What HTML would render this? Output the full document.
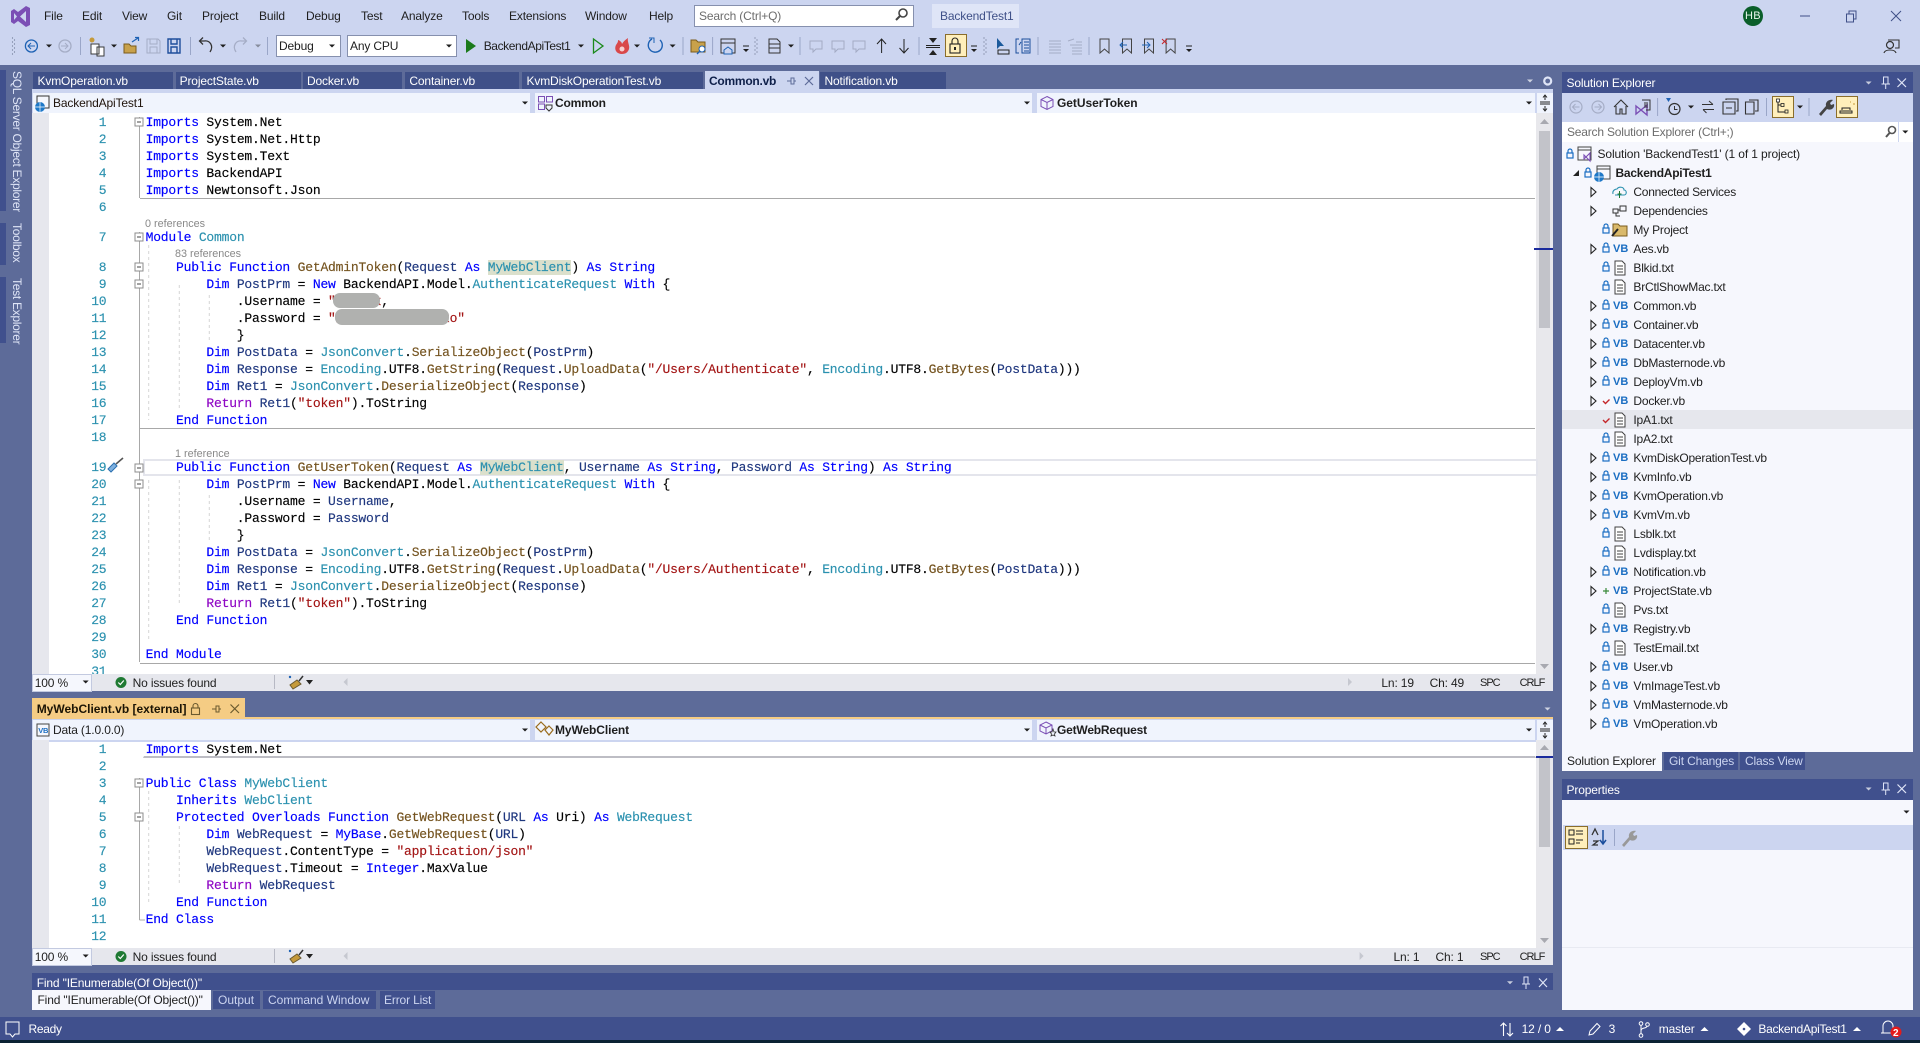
<!DOCTYPE html>
<html lang="en"><head><meta charset="utf-8"><title>BackendTest1 - Visual Studio</title>
<style>
html,body{margin:0;padding:0;width:1920px;height:1043px;overflow:hidden;background:#5D6B99}
body{position:relative;font:12px/16px "Liberation Sans",sans-serif;color:#1e1e1e;letter-spacing:-.15px}
.a{position:absolute;white-space:pre}
.b{position:absolute}
.w{color:#fff}.p{color:#dfe5f7}
.c{position:absolute;left:145.6px;height:17px;margin-top:1px;font:13px/17px "Liberation Mono",monospace;letter-spacing:-.2px;white-space:pre;color:#000;-webkit-text-stroke:.15px}
.n{position:absolute;left:60px;width:46.4px;margin-top:1px;text-align:right;font:13px/17px "Liberation Mono",monospace;letter-spacing:-.2px;color:#2B91AF;-webkit-text-stroke:.15px}
.k{color:#0000FF}.t{color:#2B91AF}.f{color:#74531F}.v{color:#1F377F}.s{color:#A31515}.q{color:#8F08C4}
.h{background:#DBE0CC}
.r{position:absolute;margin-top:1px;color:#888;font-size:10.8px;line-height:14px;letter-spacing:0}
.vb{position:absolute;left:1613px;color:#1b6ec2;font-weight:bold;font-size:11px;line-height:14px;letter-spacing:0}
.x{position:absolute;left:1633.4px;line-height:16px;white-space:pre;letter-spacing:-.2px}
.bd{font-weight:bold}
.u{font-size:11px;letter-spacing:-1px}
.sd{letter-spacing:-.28px}
</style></head><body>
<!-- chrome -->
<div class="b" style="left:0;top:0;width:1920px;height:65px;background:#CCD5F0"></div>
<div class="b" style="left:0;top:1017px;width:1920px;height:23px;background:#40508D"></div>
<div class="b" style="left:0;top:1040px;width:1920px;height:3px;background:#0B2233"></div>
<!-- side tabs -->
<div class="b" style="left:0;top:70px;width:6px;height:141px;background:#40508D"></div>
<div class="b" style="left:0;top:223px;width:6px;height:42px;background:#40508D"></div>
<div class="b" style="left:0;top:277px;width:6px;height:66px;background:#40508D"></div>
<div class="a p sd" style="left:9px;top:71px;writing-mode:vertical-rl">SQL Server Object Explorer</div>
<div class="a p sd" style="left:9px;top:223px;writing-mode:vertical-rl">Toolbox</div>
<div class="a p sd" style="left:9px;top:278px;writing-mode:vertical-rl">Test Explorer</div>
<!-- menu -->
<div class="a" style="left:44px;top:8px">File</div><div class="a" style="left:82px;top:8px">Edit</div><div class="a" style="left:122px;top:8px">View</div><div class="a" style="left:167px;top:8px">Git</div><div class="a" style="left:202px;top:8px">Project</div><div class="a" style="left:259px;top:8px">Build</div><div class="a" style="left:306px;top:8px">Debug</div><div class="a" style="left:361px;top:8px">Test</div><div class="a" style="left:401px;top:8px">Analyze</div><div class="a" style="left:462px;top:8px">Tools</div><div class="a" style="left:509px;top:8px">Extensions</div><div class="a" style="left:585px;top:8px">Window</div><div class="a" style="left:649px;top:8px">Help</div>
<div class="b" style="left:694px;top:5px;width:218px;height:20px;background:#fff;border:1px solid #8690AE"></div>
<div class="a" style="left:699px;top:8px;color:#6d6d6d">Search (Ctrl+Q)</div>
<div class="b" style="left:932px;top:4px;width:87px;height:24px;background:#DFE5F7"></div>
<div class="a" style="left:940px;top:8px;color:#3F5088">BackendTest1</div>
<div class="b" style="left:1742.6px;top:6px;width:20px;height:20px;border-radius:50%;background:#0A5E2A"></div>
<div class="a" style="left:1745px;top:8px;color:#e8f5ec;font-size:11px;letter-spacing:.3px">HB</div>
<!-- toolbar combos -->
<div class="b" style="left:275.5px;top:35px;width:63px;height:20px;background:#fff;border:1px solid #8690AE"></div>
<div class="a" style="left:279px;top:38px">Debug</div>
<div class="b" style="left:346.5px;top:35px;width:108px;height:20px;background:#fff;border:1px solid #8690AE"></div>
<div class="a" style="left:350px;top:38px">Any CPU</div>
<div class="a" style="left:483.7px;top:38px;letter-spacing:-.4px">BackendApiTest1</div>
<div class="b" style="left:945px;top:34px;width:20px;height:21px;background:#FFEFBB;border:1px solid #8A6D2B"></div>
<!-- doc tabs -->
<div class="b" style="left:33px;top:72px;width:140px;height:17px;background:#3F5088"></div>
<div class="b" style="left:176px;top:72px;width:125px;height:17px;background:#3F5088"></div>
<div class="b" style="left:303px;top:72px;width:99px;height:17px;background:#3F5088"></div>
<div class="b" style="left:405px;top:72px;width:114px;height:17px;background:#3F5088"></div>
<div class="b" style="left:522px;top:72px;width:181px;height:17px;background:#3F5088"></div>
<div class="b" style="left:705px;top:71px;width:114px;height:19px;background:#CCD5F0"></div>
<div class="b" style="left:820px;top:72px;width:126px;height:17px;background:#3F5088"></div>
<div class="a w" style="left:37.5px;top:73px">KvmOperation.vb</div><div class="a w" style="left:179.6px;top:73px">ProjectState.vb</div><div class="a w" style="left:307px;top:73px">Docker.vb</div><div class="a w" style="left:409.4px;top:73px">Container.vb</div><div class="a w" style="left:526.5px;top:73px">KvmDiskOperationTest.vb</div>
<div class="a bd" style="left:709px;top:73px;color:#0E1F49;letter-spacing:-.25px">Common.vb</div>
<div class="a w" style="left:824.5px;top:73px">Notification.vb</div>
<!-- editor 1 -->
<div class="b" style="left:32px;top:89px;width:1521px;height:24px;background:#CCD5F0"></div>
<div class="b" style="left:33px;top:92.5px;width:497px;height:20px;background:#F0F4FD"></div>
<div class="b" style="left:535px;top:92.5px;width:497px;height:20px;background:#F0F4FD"></div>
<div class="b" style="left:1037px;top:92.5px;width:498px;height:20px;background:#F0F4FD"></div>
<div class="b" style="left:1537px;top:92.5px;width:16px;height:20px;background:#F0F4FD"></div>
<div class="a" style="left:53px;top:95px;color:#20140c">BackendApiTest1</div>
<div class="a bd" style="left:555px;top:95px;letter-spacing:-.2px">Common</div>
<div class="a bd" style="left:1057px;top:95px;letter-spacing:-.05px">GetUserToken</div>
<div class="b" style="left:32px;top:113px;width:17px;height:561px;background:#E6E7ED"></div>
<div class="b" style="left:49px;top:113px;width:1487px;height:561px;background:#fff;overflow:hidden"></div>
<div class="b" style="left:1536px;top:113px;width:17px;height:561px;background:#E8E8EC"></div>
<div class="b" style="left:1539px;top:131px;width:11px;height:197px;background:#C2C3C9"></div>
<div class="b" style="left:1534px;top:248px;width:19px;height:2px;background:#1a2a9c"></div>
<div class="b" style="left:139.5px;top:198px;width:1395px;height:1px;background:#A8A8A8"></div>
<div class="b" style="left:139.5px;top:428px;width:1395px;height:1px;background:#A8A8A8"></div>
<div class="b" style="left:139.5px;top:662.5px;width:1395px;height:1px;background:#A8A8A8"></div>
<div class="b" style="left:143px;top:459px;width:1391px;height:13px;border:2px solid #E4E5EC"></div>
<div class="b" style="left:332.6px;top:293px;width:47.4px;height:15px;background:#B0B1AF;border-radius:7px;z-index:2"></div>
<div class="b" style="left:334.7px;top:309px;width:114.3px;height:16px;background:#B0B1AF;border-radius:7px;z-index:2"></div>

<div class="n" style="top:113px">1</div><div class="c" style="top:113px"><span class="k">Imports</span> System.Net</div>
<div class="n" style="top:130px">2</div><div class="c" style="top:130px"><span class="k">Imports</span> System.Net.Http</div>
<div class="n" style="top:147px">3</div><div class="c" style="top:147px"><span class="k">Imports</span> System.Text</div>
<div class="n" style="top:164px">4</div><div class="c" style="top:164px"><span class="k">Imports</span> BackendAPI</div>
<div class="n" style="top:181px">5</div><div class="c" style="top:181px"><span class="k">Imports</span> Newtonsoft.Json</div>
<div class="n" style="top:198px">6</div>
<div class="r" style="left:145px;top:216px">0 references</div>
<div class="n" style="top:228px">7</div><div class="c" style="top:228px"><span class="k">Module</span> <span class="t">Common</span></div>
<div class="r" style="left:175px;top:246px">83 references</div>
<div class="n" style="top:258px">8</div><div class="c" style="top:258px">    <span class="k">Public Function</span> <span class="f">GetAdminToken</span>(<span class="v">Request</span> <span class="k">As</span> <span class="t h">MyWebClient</span>) <span class="k">As String</span></div>
<div class="n" style="top:275px">9</div><div class="c" style="top:275px">        <span class="k">Dim</span> <span class="v">PostPrm</span> = <span class="k">New</span> BackendAPI.Model.<span class="t">AuthenticateRequest</span> <span class="k">With</span> {</div>
<div class="n" style="top:292px">10</div><div class="c" style="top:292px">            .Username = <span class="s">"xxxxxx</span>,</div>
<div class="n" style="top:309px">11</div><div class="c" style="top:309px">            .Password = <span class="s">"xxxxxxxxxxxxxxxo"</span></div>
<div class="n" style="top:326px">12</div><div class="c" style="top:326px">            }</div>
<div class="n" style="top:343px">13</div><div class="c" style="top:343px">        <span class="k">Dim</span> <span class="v">PostData</span> = <span class="t">JsonConvert</span>.<span class="f">SerializeObject</span>(<span class="v">PostPrm</span>)</div>
<div class="n" style="top:360px">14</div><div class="c" style="top:360px">        <span class="k">Dim</span> <span class="v">Response</span> = <span class="t">Encoding</span>.UTF8.<span class="f">GetString</span>(<span class="v">Request</span>.<span class="f">UploadData</span>(<span class="s">"/Users/Authenticate"</span>, <span class="t">Encoding</span>.UTF8.<span class="f">GetBytes</span>(<span class="v">PostData</span>)))</div>
<div class="n" style="top:377px">15</div><div class="c" style="top:377px">        <span class="k">Dim</span> <span class="v">Ret1</span> = <span class="t">JsonConvert</span>.<span class="f">DeserializeObject</span>(<span class="v">Response</span>)</div>
<div class="n" style="top:394px">16</div><div class="c" style="top:394px">        <span class="q">Return</span> <span class="v">Ret1</span>(<span class="s">"token"</span>).ToString</div>
<div class="n" style="top:411px">17</div><div class="c" style="top:411px">    <span class="k">End Function</span></div>
<div class="n" style="top:428px">18</div>
<div class="r" style="left:175px;top:446px">1 reference</div>
<div class="n" style="top:458px">19</div><div class="c" style="top:458px">    <span class="k">Public Function</span> <span class="f">GetUserToken</span>(<span class="v">Request</span> <span class="k">As</span> <span class="t h">MyWebClient</span>, <span class="v">Username</span> <span class="k">As String</span>, <span class="v">Password</span> <span class="k">As String</span>) <span class="k">As String</span></div>
<div class="n" style="top:475px">20</div><div class="c" style="top:475px">        <span class="k">Dim</span> <span class="v">PostPrm</span> = <span class="k">New</span> BackendAPI.Model.<span class="t">AuthenticateRequest</span> <span class="k">With</span> {</div>
<div class="n" style="top:492px">21</div><div class="c" style="top:492px">            .Username = <span class="v">Username</span>,</div>
<div class="n" style="top:509px">22</div><div class="c" style="top:509px">            .Password = <span class="v">Password</span></div>
<div class="n" style="top:526px">23</div><div class="c" style="top:526px">            }</div>
<div class="n" style="top:543px">24</div><div class="c" style="top:543px">        <span class="k">Dim</span> <span class="v">PostData</span> = <span class="t">JsonConvert</span>.<span class="f">SerializeObject</span>(<span class="v">PostPrm</span>)</div>
<div class="n" style="top:560px">25</div><div class="c" style="top:560px">        <span class="k">Dim</span> <span class="v">Response</span> = <span class="t">Encoding</span>.UTF8.<span class="f">GetString</span>(<span class="v">Request</span>.<span class="f">UploadData</span>(<span class="s">"/Users/Authenticate"</span>, <span class="t">Encoding</span>.UTF8.<span class="f">GetBytes</span>(<span class="v">PostData</span>)))</div>
<div class="n" style="top:577px">26</div><div class="c" style="top:577px">        <span class="k">Dim</span> <span class="v">Ret1</span> = <span class="t">JsonConvert</span>.<span class="f">DeserializeObject</span>(<span class="v">Response</span>)</div>
<div class="n" style="top:594px">27</div><div class="c" style="top:594px">        <span class="q">Return</span> <span class="v">Ret1</span>(<span class="s">"token"</span>).ToString</div>
<div class="n" style="top:611px">28</div><div class="c" style="top:611px">    <span class="k">End Function</span></div>
<div class="n" style="top:628px">29</div>
<div class="n" style="top:645px">30</div><div class="c" style="top:645px"><span class="k">End Module</span></div>
<div class="n" style="top:662px;height:11px;overflow:hidden">31</div>
<!-- status 1 -->
<div class="b" style="left:32px;top:674px;width:1521px;height:17px;background:#E6E7ED"></div>
<div class="b" style="left:32px;top:674px;width:58px;height:16px;background:#F5F7FD;border:1px solid #C3CAE0"></div>
<div class="a" style="left:34.7px;top:675px">100 %</div>
<div class="a" style="left:132.6px;top:675px">No issues found</div>
<div class="a" style="left:1381.4px;top:675px">Ln: 19</div><div class="a" style="left:1429.6px;top:675px">Ch: 49</div><div class="a u" style="left:1480px;top:675px">SPC</div><div class="a u" style="left:1519.6px;top:675px">CRLF</div>
<!-- editor 2 -->
<div class="b" style="left:32px;top:698px;width:213px;height:19px;background:#F5CC84"></div>
<div class="a bd" style="left:36.7px;top:701px;color:#1b1405;letter-spacing:0">MyWebClient.vb [external]</div>
<div class="b" style="left:32px;top:716.5px;width:1521px;height:25px;background:#CCD5F0"></div>
<div class="b" style="left:32px;top:716.5px;width:1521px;height:2px;background:#F5CC84"></div>
<div class="b" style="left:33px;top:719.5px;width:497px;height:20px;background:#F0F4FD"></div>
<div class="b" style="left:535px;top:719.5px;width:497px;height:20px;background:#F0F4FD"></div>
<div class="b" style="left:1037px;top:719.5px;width:498px;height:20px;background:#F0F4FD"></div>
<div class="b" style="left:1537px;top:719.5px;width:16px;height:20px;background:#F0F4FD"></div>
<div class="a" style="left:53px;top:722px">Data (1.0.0.0)</div>
<div class="a bd" style="left:555px;top:722px;letter-spacing:-.1px">MyWebClient</div>
<div class="a bd" style="left:1057px;top:722px;letter-spacing:-.2px">GetWebRequest</div>
<div class="b" style="left:32px;top:740px;width:17px;height:208px;background:#E6E7ED"></div>
<div class="b" style="left:49px;top:741.5px;width:1487px;height:206.5px;background:#fff"></div>
<div class="b" style="left:1536px;top:740px;width:17px;height:208px;background:#E8E8EC"></div>
<div class="b" style="left:1539px;top:757px;width:11px;height:90px;background:#C2C3C9"></div>
<div class="b" style="left:1534px;top:756px;width:19px;height:2px;background:#1a2a9c"></div>
<div class="b" style="left:143px;top:742px;width:1391px;height:13px;border:1px solid #fff;border-bottom:2px solid #BDBDC4"></div>
<div class="n" style="top:740px">1</div><div class="c" style="top:740px"><span class="k">Imports</span> System.Net</div>
<div class="n" style="top:757px">2</div>
<div class="n" style="top:774px">3</div><div class="c" style="top:774px"><span class="k">Public Class</span> <span class="t">MyWebClient</span></div>
<div class="n" style="top:791px">4</div><div class="c" style="top:791px">    <span class="k">Inherits</span> <span class="t">WebClient</span></div>
<div class="n" style="top:808px">5</div><div class="c" style="top:808px">    <span class="k">Protected Overloads Function</span> <span class="f">GetWebRequest</span>(<span class="v">URL</span> <span class="k">As</span> Uri) <span class="k">As</span> <span class="t">WebRequest</span></div>
<div class="n" style="top:825px">6</div><div class="c" style="top:825px">        <span class="k">Dim</span> <span class="v">WebRequest</span> = <span class="k">MyBase</span>.<span class="f">GetWebRequest</span>(<span class="v">URL</span>)</div>
<div class="n" style="top:842px">7</div><div class="c" style="top:842px">        <span class="v">WebRequest</span>.ContentType = <span class="s">"application/json"</span></div>
<div class="n" style="top:859px">8</div><div class="c" style="top:859px">        <span class="v">WebRequest</span>.Timeout = <span class="k">Integer</span>.MaxValue</div>
<div class="n" style="top:876px">9</div><div class="c" style="top:876px">        <span class="q">Return</span> <span class="v">WebRequest</span></div>
<div class="n" style="top:893px">10</div><div class="c" style="top:893px">    <span class="k">End Function</span></div>
<div class="n" style="top:910px">11</div><div class="c" style="top:910px"><span class="k">End Class</span></div>
<div class="n" style="top:927px">12</div>
<!-- status 2 -->
<div class="b" style="left:32px;top:948px;width:1521px;height:17px;background:#E6E7ED"></div>
<div class="b" style="left:32px;top:948px;width:58px;height:16px;background:#F5F7FD;border:1px solid #C3CAE0"></div>
<div class="a" style="left:34.7px;top:949px">100 %</div>
<div class="a" style="left:132.6px;top:949px">No issues found</div>
<div class="a" style="left:1393.5px;top:949px">Ln: 1</div><div class="a" style="left:1435.5px;top:949px">Ch: 1</div><div class="a u" style="left:1480px;top:949px">SPC</div><div class="a u" style="left:1519.6px;top:949px">CRLF</div>
<!-- find panel -->
<div class="b" style="left:32px;top:972.5px;width:1521px;height:17.5px;background:#40508D"></div>
<div class="a w" style="left:36.7px;top:975px">Find "IEnumerable(Of Object())"</div>
<div class="b" style="left:32px;top:990px;width:179px;height:20px;background:#F6F7FD"></div>
<div class="b" style="left:213px;top:991px;width:47px;height:18px;background:#40508D"></div>
<div class="b" style="left:263px;top:991px;width:113px;height:18px;background:#40508D"></div>
<div class="b" style="left:380px;top:991px;width:55px;height:18px;background:#40508D"></div>
<div class="a" style="left:37.5px;top:992px">Find "IEnumerable(Of Object())"</div>
<div class="a" style="left:218px;top:992px;color:#CCD5F0;letter-spacing:0">Output</div><div class="a" style="left:268px;top:992px;color:#CCD5F0;letter-spacing:0">Command Window</div><div class="a" style="left:384px;top:992px;color:#CCD5F0">Error List</div>
<!-- status bar -->
<div class="a w" style="left:28.5px;top:1021px;letter-spacing:-.3px">Ready</div>
<div class="a w" style="left:1521.6px;top:1021px">12 / 0</div><div class="a w" style="left:1608.6px;top:1021px">3</div><div class="a w" style="left:1658.8px;top:1021px">master</div><div class="a w" style="left:1758.4px;top:1021px;letter-spacing:-.3px">BackendApiTest1</div>
<!-- solution explorer -->
<div class="b" style="left:1562px;top:72px;width:351px;height:21px;background:#40508D"></div>
<div class="a w" style="left:1566.5px;top:75px">Solution Explorer</div>
<div class="b" style="left:1562px;top:93px;width:351px;height:29px;background:#CCD5F0"></div>
<div class="b" style="left:1772px;top:96px;width:20px;height:20px;background:#FFEFBB;border:1px solid #8A6D2B"></div>
<div class="b" style="left:1836px;top:96px;width:20px;height:20px;background:#FFEFBB;border:1px solid #8A6D2B"></div>
<div class="b" style="left:1562px;top:122px;width:351px;height:20px;background:#fff"></div>
<div class="a" style="left:1567px;top:124px;color:#6d6d6d;letter-spacing:-.2px">Search Solution Explorer (Ctrl+;)</div>
<div class="b" style="left:1562px;top:142px;width:351px;height:610px;background:#F6F7FD"></div>
<div class="b" style="left:1562px;top:410px;width:351px;height:19px;background:#E6E7ED"></div>
<div class="x" style="left:1597.5px;top:146px;letter-spacing:-.12px">Solution 'BackendTest1' (1 of 1 project)</div>
<div class="x bd" style="left:1615.5px;top:165px;letter-spacing:-.25px">BackendApiTest1</div>
<div class="x" style="top:184px;letter-spacing:-.27px">Connected Services</div>
<div class="x" style="top:203px">Dependencies</div>
<div class="x" style="top:222px">My Project</div>
<div class="x" style="top:241px">Aes.vb</div><div class="vb" style="top:242px">VB</div>
<div class="x" style="top:260px">Blkid.txt</div>
<div class="x" style="top:279px">BrCtlShowMac.txt</div>
<div class="x" style="top:298px">Common.vb</div><div class="vb" style="top:299px">VB</div>
<div class="x" style="top:317px">Container.vb</div><div class="vb" style="top:318px">VB</div>
<div class="x" style="top:336px">Datacenter.vb</div><div class="vb" style="top:337px">VB</div>
<div class="x" style="top:355px">DbMasternode.vb</div><div class="vb" style="top:356px">VB</div>
<div class="x" style="top:374px">DeployVm.vb</div><div class="vb" style="top:375px">VB</div>
<div class="x" style="top:393px">Docker.vb</div><div class="vb" style="top:394px">VB</div>
<div class="x" style="top:412px">IpA1.txt</div>
<div class="x" style="top:431px">IpA2.txt</div>
<div class="x" style="top:450px">KvmDiskOperationTest.vb</div><div class="vb" style="top:451px">VB</div>
<div class="x" style="top:469px">KvmInfo.vb</div><div class="vb" style="top:470px">VB</div>
<div class="x" style="top:488px">KvmOperation.vb</div><div class="vb" style="top:489px">VB</div>
<div class="x" style="top:507px">KvmVm.vb</div><div class="vb" style="top:508px">VB</div>
<div class="x" style="top:526px">Lsblk.txt</div>
<div class="x" style="top:545px">Lvdisplay.txt</div>
<div class="x" style="top:564px">Notification.vb</div><div class="vb" style="top:565px">VB</div>
<div class="x" style="top:583px">ProjectState.vb</div><div class="vb" style="top:584px">VB</div>
<div class="x" style="top:602px">Pvs.txt</div>
<div class="x" style="top:621px">Registry.vb</div><div class="vb" style="top:622px">VB</div>
<div class="x" style="top:640px">TestEmail.txt</div>
<div class="x" style="top:659px">User.vb</div><div class="vb" style="top:660px">VB</div>
<div class="x" style="top:678px">VmImageTest.vb</div><div class="vb" style="top:679px">VB</div>
<div class="x" style="top:697px">VmMasternode.vb</div><div class="vb" style="top:698px">VB</div>
<div class="x" style="top:716px">VmOperation.vb</div><div class="vb" style="top:717px">VB</div>
<div class="b" style="left:1562px;top:752px;width:100px;height:19px;background:#F6F7FD"></div>
<div class="b" style="left:1664px;top:752px;width:74px;height:18px;background:#40508D"></div>
<div class="b" style="left:1740px;top:752px;width:65px;height:18px;background:#40508D"></div>
<div class="a" style="left:1567px;top:753px">Solution Explorer</div>
<div class="a" style="left:1669px;top:753px;color:#CCD5F0">Git Changes</div>
<div class="a" style="left:1745px;top:753px;color:#CCD5F0">Class View</div>
<!-- properties -->
<div class="b" style="left:1562px;top:779px;width:351px;height:21px;background:#40508D"></div>
<div class="a w" style="left:1566.5px;top:782px">Properties</div>
<div class="b" style="left:1562px;top:800px;width:351px;height:210px;background:#F6F7FD"></div>
<div class="b" style="left:1563px;top:825px;width:350px;height:25px;background:#CCD5F0"></div>
<div class="b" style="left:1565px;top:826px;width:21px;height:21px;background:#FFEFBB;border:1px solid #8A6D2B"></div>
<div class="b" style="left:1562px;top:947px;width:351px;height:1px;background:#E8EAF2"></div>

<svg class="b" style="left:0;top:0;z-index:5" width="1920" height="1043" viewBox="0 0 1920 1043" fill="none">
<defs>
<g id="lk" stroke="#1b6ec2" stroke-width="1.2"><rect x="-3" y="-1" width="6" height="5"/><path d="M-2-1V-3a2 2 0 0 1 4 0V-1"/></g>
<path id="ex" d="M-2.5-4.5L2.5 0L-2.5 4.5Z" stroke="#222" stroke-width="1.1"/>
<g id="dc"><path d="M-5-7H2L5-4V7H-5Z" fill="#fff" stroke="#424242"/><path d="M-3-2H3M-3 1H3M-3 4H3" stroke="#424242"/></g>
<path id="dd" d="M-3-1.5H3L0 1.5Z" fill="#1E1E1E"/>
<path id="dl" d="M-3-1.5H3L0 1.5Z" fill="#fff" opacity=".7"/>
<g id="ov"><path d="M-3-4H3" stroke="#1E1E1E"/><path d="M-3-1H3L0 2Z" fill="#1E1E1E"/></g>
<g id="bx"><rect x="-4" y="-4" width="8" height="8" fill="#fff" stroke="#8c8c8c"/><path d="M-2 0H2" stroke="#444"/></g>
<path id="sp" d="M0-9V9" stroke="#9aa6c8"/>
<g id="gr" fill="#6a7390"><circle cx="-1" cy="-8" r=".6"/><circle cx="1" cy="-6" r=".6"/><circle cx="-1" cy="-4" r=".6"/><circle cx="1" cy="-2" r=".6"/><circle cx="-1" cy="0" r=".6"/><circle cx="1" cy="2" r=".6"/><circle cx="-1" cy="4" r=".6"/><circle cx="1" cy="6" r=".6"/><circle cx="-1" cy="8" r=".6"/></g>
<g id="cm"><path d="M-6-5H6V3H0L-3 6V3H-6Z" stroke="#a3abc4"/></g>
<g id="bm"><path d="M-4.5-7H4.5V7L0 3L-4.5 7Z" stroke="#444"/></g>
</defs>
<!-- VS logo -->
<path d="M14 9L18 12L26 6L30 8V25L26 27L18 21L14 24L11 22V11Z" fill="#7B4FB5"/><path d="M14 13V20L17 16.5Z M26 11L20 16.5L26 22Z" fill="#CCD5F0"/>
<!-- search icon -->
<circle cx="903" cy="13" r="4" stroke="#444" stroke-width="1.6"/><path d="M900 16L896 20" stroke="#444" stroke-width="2"/>
<!-- window controls -->
<path d="M1800 16H1810" stroke="#3F5088"/><rect x="1846.5" y="14" width="7" height="8" stroke="#3F5088"/><path d="M1849 14V11H1856V19H1854" stroke="#3F5088"/><path d="M1891 11L1901 21M1901 11L1891 21" stroke="#3F5088"/>
<circle cx="1890" cy="45" r="3.5" stroke="#333" stroke-width="1.2"/><path d="M1884 53C1885 49 1895 49 1896 53M1888 40H1899V48H1895" stroke="#333" stroke-width="1.1"/>
<!-- main toolbar -->
<use href="#gr" x="13.5" y="46"/>
<circle cx="31.4" cy="46" r="6" stroke="#1E62B4" stroke-width="1.3"/><path d="M28 46H35M31 43L28 46L31 49" stroke="#1E62B4"/>
<use href="#dd" x="49" y="46"/>
<circle cx="65" cy="46" r="6" stroke="#A5ADC6" stroke-width="1.3"/><path d="M61 46H68M65 43L68 46L65 49" stroke="#A5ADC6"/>
<use href="#sp" x="80.5" y="46"/>
<path d="M91 44H99V54H91Z M97 47H104V56H97Z" stroke="#333" fill="#fff" opacity=".95"/><circle cx="92" cy="40" r="2.5" fill="#C59A3A"/>
<use href="#dd" x="114" y="46"/>
<path d="M124 44H129L131 46H136V53H124Z" fill="#C8A14B" stroke="#7a5c1d"/><path d="M132 42L138 38M135 37.5H138.5V41" stroke="#1E62B4" stroke-width="1.2"/>
<path d="M147 39H158L160 41V53H147Z M150 39V44H157V39M150 53V47H157V53" stroke="#A5ADC6"/>
<path d="M168 39H180V53H168Z M171 39V44H177V39M171 53V47H177V53" stroke="#1E4E9C" stroke-width="1.4"/>
<use href="#sp" x="190.5" y="46"/>
<path d="M210 52C214 46 210 40 204 41L200 41M203 37.5L199.5 41L203 44.5" stroke="#333" stroke-width="1.3"/>
<use href="#dd" x="223" y="46"/>
<path d="M236 52C232 46 236 40 242 41L246 41M243 37.5L246.5 41L243 44.5" stroke="#A5ADC6" stroke-width="1.3"/>
<use href="#dd" x="258" y="46" opacity=".4"/>
<use href="#sp" x="267.5" y="46"/>
<use href="#dd" x="332" y="46"/><use href="#dd" x="449" y="46"/>
<path d="M466 39L476 46L466 53Z" fill="#1B7A1B"/>
<use href="#dd" x="581" y="46"/>
<path d="M593.5 39L603 46L593.5 53Z" stroke="#1B8A1B" stroke-width="1.3"/>
<path d="M622 54C616 54 614 49 616 45C618 42 618 42 618 40C621 41 622 43 622 44C623 42 625 40 628 38C627 42 630 45 629 49C628 52 626 54 622 54Z" fill="#D9484A"/><circle cx="622" cy="49" r="2.5" fill="#f7d0d0"/>
<use href="#dd" x="637" y="46"/>
<path d="M652 39A7 7 0 1 0 660 40" stroke="#1E62B4" stroke-width="1.4"/><path d="M649 38H654V43" stroke="#1E62B4"/>
<use href="#dd" x="672.6" y="46"/>
<use href="#sp" x="683" y="46"/>
<path d="M691 40H696L698 42H705V52H691Z" fill="#C8A14B" stroke="#7a5c1d"/><circle cx="702" cy="49" r="3" fill="#fff" stroke="#1E62B4"/><path d="M700 51L697 54" stroke="#1E62B4" stroke-width="1.3"/>
<use href="#sp" x="712.6" y="46"/>
<path d="M721 39H735V53H721ZM721 43H735" stroke="#333"/><path d="M724 50L728 47L732 50V54H724Z" fill="#CCD5F0" stroke="#1E62B4"/>
<use href="#ov" x="746" y="50"/>
<use href="#gr" x="756" y="46"/>
<path d="M769 39H777L780 42V53H769ZM769 44H780M769 48H780" stroke="#333"/>
<use href="#dd" x="791" y="46"/>
<use href="#sp" x="800" y="46"/>
<use href="#cm" x="816" y="46"/><use href="#cm" x="838" y="46"/><use href="#cm" x="859" y="46"/>
<path d="M881.6 53V39M877 44L881.6 39L886 44" stroke="#222"/><path d="M904 39V53M899.5 48L904 53L908.5 48" stroke="#222"/>
<use href="#sp" x="919" y="46"/>
<path d="M926 45.5H940M926 47.5H940" stroke="#222" stroke-width=".9"/><path d="M929 38H937L933 43ZM929 55H937L933 50Z" fill="#222"/>
<rect x="950" y="44" width="10" height="9" stroke="#222" stroke-width="1.1"/><path d="M952 44V41a3 3 0 0 1 6 0V44" stroke="#222" stroke-width="1.1"/><rect x="954" y="47" width="2" height="3" fill="#222"/>
<use href="#ov" x="974" y="50"/>
<use href="#gr" x="985" y="46"/>
<path d="M997 38V49L1000 46L1004 46Z" fill="#1b5a9c"/><path d="M998 50H1009V54H998Z" stroke="#222"/>
<path d="M1019 39H1016V53H1019M1021 42L1019 45M1022 39H1030V53H1022ZM1024 42H1029M1024 45H1029M1024 48H1029M1024 51H1029" stroke="#1b4e9c"/>
<use href="#sp" x="1038" y="46"/>
<path d="M1049 41H1061M1049 44H1061M1049 47H1061M1049 50H1061M1049 53H1061" stroke="#A5ADC6"/>
<path d="M1068 41L1074 39M1070 45H1082M1076 42H1082M1072 48H1082M1072 51H1082M1072 54H1082" stroke="#A5ADC6"/>
<use href="#sp" x="1089" y="46"/>
<use href="#bm" x="1104.5" y="46"/>
<use href="#bm" x="1127" y="46"/><path d="M1120 45H1127M1123 42L1120 45L1123 48" stroke="#1E62B4"/>
<use href="#bm" x="1149" y="46"/><path d="M1142 45H1150M1147 42L1150 45L1147 48" stroke="#1E62B4"/>
<use href="#bm" x="1170.6" y="46"/><path d="M1162 39L1167 44M1167 39L1162 44" stroke="#C4262A"/>
<use href="#ov" x="1189" y="50"/>
<!-- doc well icons -->
<use href="#dl" x="1530" y="81"/>
<circle cx="1547.7" cy="81" r="3.5" stroke="#dfe5f7" stroke-width="2.2"/>
<path d="M787 81H791M791 78V84H794V78ZM794 81H796" stroke="#5d6b99"/><path d="M805 77L813 85M813 77L805 85" stroke="#5d6b99" stroke-width="1.2"/>
<!-- nav icons -->
<rect x="42" y="97" width="12" height="12" stroke="#333" fill="#f5f7fd" transform="translate(-5 -1)"/>
<circle cx="40" cy="107" r="5" fill="#1E78C8"/><path d="M35 107H45M40 102V112" stroke="#fff" stroke-width=".7"/>
<rect x="538.5" y="96.5" width="6" height="5.5" stroke="#7B4FB5"/><rect x="546.5" y="96.5" width="6" height="5.5" stroke="#7B4FB5"/><rect x="538.5" y="104" width="6" height="5.5" stroke="#7B4FB5"/><path d="M546 105H552V108L549 111L546 108Z" stroke="#333"/>
<path d="M1047 96L1053 99V106L1047 109L1041 106V99ZM1041 99L1047 102L1053 99M1047 102V109" stroke="#7B4FB5" transform="translate(0 .5)"/>
<use href="#dd" x="525" y="103"/><use href="#dd" x="1027" y="103"/><use href="#dd" x="1529" y="103"/>
<path d="M1540 102H1550M1540 104H1550M1545 95V100M1545 106V111M1543 97.5L1545 95L1547 97.5M1543 108.5L1545 111L1547 108.5" stroke="#222"/>
<!-- editor 2 nav icons -->
<rect x="37" y="724" width="12" height="12" fill="#f5f7fd" stroke="#444"/><text x="38.2" y="733" font-family="Liberation Sans" font-size="7.5" font-weight="bold" fill="#1b6ec2">VB</text>
<path d="M541 722L546 727L541 732L536 727ZM549 726L553 730L549 735L545 730Z" stroke="#9a6c1e" stroke-width="1.2"/>
<path d="M1046 722L1052 725V731L1046 734L1040 731V725ZM1040 725L1046 728L1052 725M1046 728V734" stroke="#7B4FB5"/><path d="M1053 729L1054 732H1056L1054.5 734L1055 736L1053 735L1051 736L1051.5 734L1050 732H1052Z" stroke="#333" stroke-width=".8"/>
<use href="#dd" x="525" y="730"/><use href="#dd" x="1027" y="730"/><use href="#dd" x="1529" y="730"/>
<path d="M1540 729H1550M1540 731H1550M1545 722V727M1545 733V738M1543 724.5L1545 722L1547 724.5M1543 735.5L1545 738L1547 735.5" stroke="#222"/>
<rect x="191.5" y="708" width="8" height="6.5" stroke="#6b5a2f" stroke-width="1.1"/><path d="M193 708V706a2.5 2.5 0 0 1 5 0V708" stroke="#6b5a2f" stroke-width="1.1"/>
<path d="M212 709H216M216 706V712H219V706ZM219 709H221" stroke="#6b5a2f"/><path d="M230.5 704.5L239 713M239 704.5L230.5 713" stroke="#6b5a2f" stroke-width="1.2"/>
<use href="#dl" x="1547.5" y="709"/>
<!-- scroll arrows -->
<path d="M1540 124L1544.5 119L1549 124Z" fill="#A8A9B0"/><path d="M1540 664L1544.5 669L1549 664Z" fill="#A8A9B0"/>
<path d="M1540 750L1544.5 745L1549 750Z" fill="#A8A9B0"/><path d="M1540 938L1544.5 943L1549 938Z" fill="#A8A9B0"/>
<!-- margin outlining -->
<path d="M139.5 117V198M139.5 232V662" stroke="#A8A8A8"/>
<path d="M139.5 778V920M139.5 920H145" stroke="#A8A8A8"/>
<path d="M148.7 245V420M148.7 480V640M148.7 791V905" stroke="#D6D6D6" stroke-dasharray="3 3"/>
<path d="M179.3 285V410M179.3 480V605M179.3 826V885" stroke="#D6D6D6" stroke-dasharray="3 3"/>
<path d="M209.3 295V340M209.3 495V540" stroke="#D6D6D6" stroke-dasharray="3 3"/>
<use href="#bx" x="139" y="122"/><use href="#bx" x="139" y="237"/><use href="#bx" x="139" y="267"/><use href="#bx" x="139" y="284"/><use href="#bx" x="139" y="468"/><use href="#bx" x="139" y="484"/>
<use href="#bx" x="139" y="783"/><use href="#bx" x="139" y="817"/>
<!-- screwdriver -->
<path d="M111 472L108 469L114 463L117 466Z" fill="#7fb1e0" stroke="#2b6fb0"/><path d="M116 464L123 458" stroke="#555" stroke-width="1.6"/>
<!-- status icons -->
<use href="#dd" x="85.7" y="682"/><use href="#dd" x="85.7" y="956"/>
<circle cx="121" cy="682.5" r="5.5" fill="#1F7A33"/><path d="M118.3 682.5L120.3 684.5L123.8 680.5" stroke="#fff" stroke-width="1.2"/>
<circle cx="121" cy="956.5" r="5.5" fill="#1F7A33"/><path d="M118.3 956.5L120.3 958.5L123.8 954.5" stroke="#fff" stroke-width="1.2"/>
<path d="M274.5 675V689M274.5 949V963" stroke="#B7B9C4"/>
<path d="M293 689L290 685L297 680L301 684Z" fill="#C59A3A" stroke="#6b5a2f"/><path d="M299 681L303 676" stroke="#333" stroke-width="1.5"/><circle cx="290" cy="677" r="1.2" fill="#1E62B4"/>
<path d="M293 963L290 959L297 954L301 958Z" fill="#C59A3A" stroke="#6b5a2f"/><path d="M299 955L303 950" stroke="#333" stroke-width="1.5"/><circle cx="290" cy="951" r="1.2" fill="#1E62B4"/>
<path d="M306 680H313L309.5 684.5Z M306 954H313L309.5 958.5Z" fill="#222"/>
<path d="M347.5 678V686L343.5 682Z M347.5 952V960L343.5 956Z" fill="#C6C8D0"/>
<path d="M1348 678V686L1352 682Z M1359.6 952V960L1363.6 956Z" fill="#C6C8D0"/>
<!-- find panel icons -->
<use href="#dl" x="1510" y="982.7"/>
<path d="M1524 977H1528V984H1524ZM1522 984H1530M1526 984V989" stroke="#dfe5f7"/><path d="M1539 978.5L1547 987M1547 978.5L1539 987" stroke="#dfe5f7" stroke-width="1.2"/>
<!-- SE header icons -->
<use href="#dl" x="1868.6" y="83"/>
<path d="M1883.5 77H1888V84H1883.5ZM1881.5 84H1890M1885.7 84V89" stroke="#dfe5f7"/><path d="M1897.5 78.5L1906 87M1906 78.5L1897.5 87" stroke="#dfe5f7" stroke-width="1.2"/>
<use href="#dl" x="1868.6" y="789"/>
<path d="M1883.5 783H1888V790H1883.5ZM1881.5 790H1890M1885.7 790V795" stroke="#dfe5f7"/><path d="M1897.5 784.5L1906 793M1906 784.5L1897.5 793" stroke="#dfe5f7" stroke-width="1.2"/>
<!-- SE toolbar -->
<circle cx="1576" cy="107" r="6" stroke="#A5ADC6" stroke-width="1.2"/><path d="M1572.5 107H1579.5M1575.5 104L1572.5 107L1575.5 110" stroke="#A5ADC6"/>
<circle cx="1598" cy="107" r="6" stroke="#A5ADC6" stroke-width="1.2"/><path d="M1594.5 107H1601.5M1598.5 104L1601.5 107L1598.5 110" stroke="#A5ADC6"/>
<path d="M1614 107L1621 100L1628 107M1616 106V114H1620V109H1622V114H1626V106" stroke="#333" stroke-width="1.1"/>
<path d="M1636 106L1641 110L1647 105V115L1641 110L1636 114Z" stroke="#7B4FB5" stroke-width="1.4"/><path d="M1642 100H1650V110H1646M1644 103H1648M1644 105H1648M1644 107H1648" stroke="#333"/>
<use href="#sp" x="1657.6" y="107"/>
<circle cx="1674.5" cy="109" r="5.5" stroke="#333" stroke-width="1.2"/><path d="M1674.5 106V109.5H1677.5" stroke="#333"/><path d="M1666 98H1671L1668.5 102Z" fill="#1E62B4"/>
<use href="#dd" x="1691" y="107"/>
<path d="M1702 104.5H1713M1709 101L1713 104.5M1714 109.5H1703M1706.5 113L1703 109.5" stroke="#333"/>
<path d="M1723 102H1735V114H1723ZM1726 108H1732M1726 100V99H1738V111H1736" stroke="#333" stroke-width="1.1"/>
<path d="M1745.5 102H1754V114H1745.5ZM1749 100H1758V111H1755" stroke="#333" stroke-width="1.1"/>
<use href="#sp" x="1766.5" y="107"/>
<path d="M1778 101V112H1786M1778 105H1781" stroke="#222"/><rect x="1776.5" y="99" width="3" height="3" fill="#fff" stroke="#222" stroke-width=".8"/><rect x="1781" y="103.5" width="3" height="3" fill="#FFEFBB" stroke="#222" stroke-width=".8"/><rect x="1785" y="110" width="3" height="3" fill="#FFEFBB" stroke="#222" stroke-width=".8"/>
<use href="#dd" x="1800" y="107"/>
<use href="#sp" x="1809" y="107"/>
<path d="M1819 114L1826 106C1825 102 1829 99 1833 100L1830 103L1831 105L1834 104C1835 108 1831 111 1827 109L1821 116Z" fill="#444"/>
<path d="M1840 111H1852V113H1840ZM1842 110V108H1850V110" stroke="#222"/><path d="M1853 104H1855M1850 102H1851" stroke="#C59A3A"/>
<!-- SE search -->
<circle cx="1892" cy="130" r="3.5" stroke="#555" stroke-width="1.6"/><path d="M1889.5 133L1886 137" stroke="#555" stroke-width="2"/>
<path d="M1898.5 122V142" stroke="#CCD5F0"/><use href="#dd" x="1905.3" y="132"/>
<!-- tree fixed -->
<use href="#lk" x="1570" y="154"/>
<path d="M1578 147H1591V160H1578ZM1578 150H1591" stroke="#444"/><path d="M1584 155L1586 157L1590 153V161L1586 157L1584 159Z" stroke="#7B4FB5" stroke-width="1.1"/>
<path d="M1573 176H1579V170Z" fill="#222"/><use href="#lk" x="1588" y="173"/>
<path d="M1597 166H1610V179H1597ZM1597 169H1610" stroke="#444"/><circle cx="1599" cy="177" r="5" fill="#1E78C8"/><path d="M1594 177H1604M1599 172V182" stroke="#fff" stroke-width=".7"/>
<use href="#ex" x="1593.5" y="192"/>
<path d="M1613 194C1612 190 1616 189 1617 189C1619 186 1624 187 1624 190C1627 190 1627 195 1624 195H1615" stroke="#2B91AF" stroke-width="1.1"/><path d="M1619.5 191V198M1617.5 194H1621.5" stroke="#1F7A33"/>
<use href="#ex" x="1593.5" y="211"/>
<path d="M1613 209H1618V213H1613ZM1620 206H1626V211H1620ZM1618 210H1620V208" stroke="#333"/><path d="M1616 213V216H1620" stroke="#333"/>
<use href="#lk" x="1606" y="229"/>
<path d="M1613 224H1618L1620 226H1627V236H1613Z" fill="#D9B96B" stroke="#7a5c1d"/><path d="M1612 236L1618 229" stroke="#222" stroke-width="2"/>
<!-- expanders vb -->
<g id="rows">
<use href="#ex" x="1593.5" y="249"/><use href="#lk" x="1606" y="248"/>
<use href="#lk" x="1606" y="267"/><use href="#dc" x="1620" y="268"/>
<use href="#lk" x="1606" y="286"/><use href="#dc" x="1620" y="287"/>
<use href="#ex" x="1593.5" y="306"/><use href="#lk" x="1606" y="305"/>
<use href="#ex" x="1593.5" y="325"/><use href="#lk" x="1606" y="324"/>
<use href="#ex" x="1593.5" y="344"/><use href="#lk" x="1606" y="343"/>
<use href="#ex" x="1593.5" y="363"/><use href="#lk" x="1606" y="362"/>
<use href="#ex" x="1593.5" y="382"/><use href="#lk" x="1606" y="381"/>
<use href="#ex" x="1593.5" y="401"/><path d="M1603 401L1605.5 403.5L1609.5 399.5" stroke="#C4262A" stroke-width="1.4"/>
<use href="#dc" x="1620" y="420"/><path d="M1603 420L1605.5 422.5L1609.5 418.5" stroke="#C4262A" stroke-width="1.4"/>
<use href="#lk" x="1606" y="438"/><use href="#dc" x="1620" y="439"/>
<use href="#ex" x="1593.5" y="458"/><use href="#lk" x="1606" y="457"/>
<use href="#ex" x="1593.5" y="477"/><use href="#lk" x="1606" y="476"/>
<use href="#ex" x="1593.5" y="496"/><use href="#lk" x="1606" y="495"/>
<use href="#ex" x="1593.5" y="515"/><use href="#lk" x="1606" y="514"/>
<use href="#lk" x="1606" y="533"/><use href="#dc" x="1620" y="534"/>
<use href="#lk" x="1606" y="552"/><use href="#dc" x="1620" y="553"/>
<use href="#ex" x="1593.5" y="572"/><use href="#lk" x="1606" y="571"/>
<use href="#ex" x="1593.5" y="591"/><path d="M1603 591H1609M1606 588V594" stroke="#3a8a3a" stroke-width="1.2"/>
<use href="#lk" x="1606" y="609"/><use href="#dc" x="1620" y="610"/>
<use href="#ex" x="1593.5" y="629"/><use href="#lk" x="1606" y="628"/>
<use href="#lk" x="1606" y="647"/><use href="#dc" x="1620" y="648"/>
<use href="#ex" x="1593.5" y="667"/><use href="#lk" x="1606" y="666"/>
<use href="#ex" x="1593.5" y="686"/><use href="#lk" x="1606" y="685"/>
<use href="#ex" x="1593.5" y="705"/><use href="#lk" x="1606" y="704"/>
<use href="#ex" x="1593.5" y="724"/><use href="#lk" x="1606" y="723"/>
</g>
<!-- properties -->
<use href="#dd" x="1906.5" y="812"/>
<path d="M1569 830H1574V835H1569ZM1569 839H1574V844H1569ZM1576 831H1583M1576 834H1583M1576 840H1583M1576 843H1580" stroke="#222"/>
<path d="M1592 835L1595 829L1598 835M1593 841H1598L1593 845H1598" stroke="#333" stroke-width="1.3"/><path d="M1603 830V843M1600 840L1603 844L1606 840" stroke="#1b4e9c" stroke-width="1.5"/>
<path d="M1614.5 829V846" stroke="#9aa6c8"/>
<path d="M1622 845L1629 837C1628 833 1632 830 1636 831L1633 834L1634 836L1637 835C1638 839 1634 842 1630 840L1624 847Z" fill="#999"/>
<!-- status bar -->
<path d="M6 1022H19V1034H15L12.5 1037L10 1034H6Z" stroke="#fff"/>
<path d="M1503.5 1036V1023M1500.5 1026L1503.5 1023L1506.5 1026M1510 1023V1036M1507 1033L1510 1036L1513 1033" stroke="#fff" stroke-width="1.1"/>
<path d="M1556 1031H1564L1560 1027Z" fill="#fff"/><path d="M1700.5 1031H1708.5L1704.5 1027Z" fill="#fff"/><path d="M1853 1031H1861L1857 1027Z" fill="#fff"/>
<path d="M1589 1035L1590 1031L1597 1023.5L1600 1026.5L1593 1034Z" stroke="#fff"/>
<path d="M1641 1025V1034M1641 1031C1641 1027 1647 1029 1647 1026" stroke="#fff"/><circle cx="1641" cy="1023.5" r="1.8" stroke="#fff"/><circle cx="1641" cy="1035.5" r="1.8" stroke="#fff"/><circle cx="1647.5" cy="1024.5" r="1.8" stroke="#fff"/>
<path d="M1744 1022L1751 1029L1744 1036L1737 1029Z" fill="#fff"/><circle cx="1744" cy="1029" r="1.3" fill="#40508D"/>
<path d="M1883 1033V1026a5 5 0 0 1 10 0V1033ZM1881 1033H1895" stroke="#fff"/>
<circle cx="1896" cy="1032" r="5.5" fill="#E41B1B"/>
<text x="1893" y="1036" font-family="Liberation Sans" font-size="10" font-weight="bold" fill="#fff">2</text>
</svg>
</body></html>
